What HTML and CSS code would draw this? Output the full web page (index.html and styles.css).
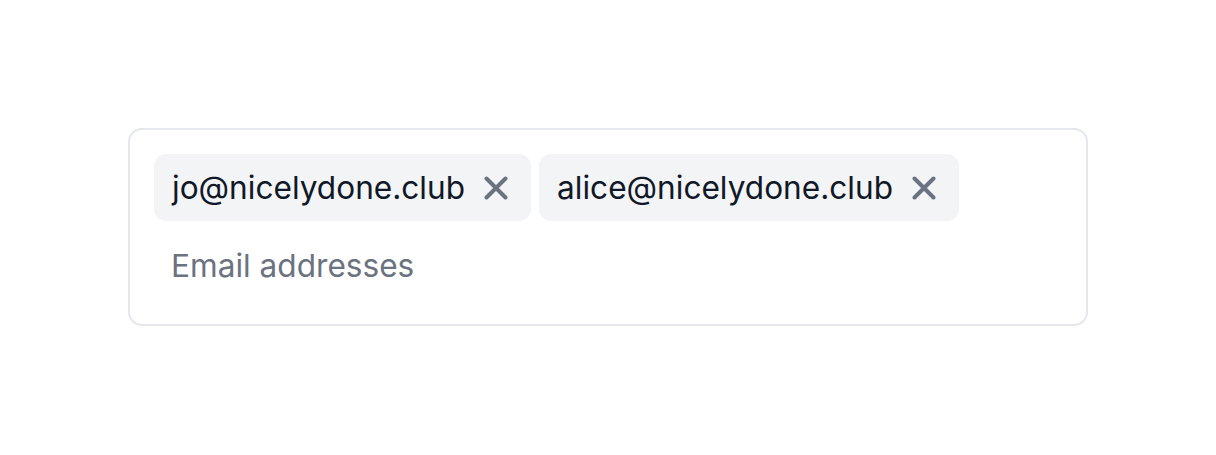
FILE: index.html
```html
<!DOCTYPE html>
<html lang="en">
<head>
  <meta charset="UTF-8" />
  <meta name="viewport" content="width=device-width, initial-scale=1.0" />
  <title>Email tags</title>
  <link rel="stylesheet" href="styles.css">
</head>
<body>
  <div class="tag-field">
    <div class="tags">
      <span class="tag">
        <span class="tag-label">jo@nicelydone.club</span>
        <button class="tag-remove" type="button" aria-label="Remove">
          <svg viewBox="0 0 24 24" width="24" height="24"><path d="M2.5 2.5L21.5 21.5M21.5 2.5L2.5 21.5" /></svg>
        </button>
      </span>
      <span class="tag">
        <span class="tag-label">alice@nicelydone.club</span>
        <button class="tag-remove" type="button" aria-label="Remove">
          <svg viewBox="0 0 24 24" width="24" height="24"><path d="M2.5 2.5L21.5 21.5M21.5 2.5L2.5 21.5" /></svg>
        </button>
      </span>
    </div>
    <input class="tag-input" type="text" placeholder="Email addresses" />
  </div>
</body>
</html>
```

FILE: styles.css
```css
* { box-sizing: border-box; }
body {
  margin: 0;
  background: #fff;
  font-family: 'Inter', 'Liberation Sans', sans-serif;
}
.tag-field {
  width: 960px;
  height: 198px;
  margin: 128px 0 0 128px;
  padding: 24px;
  border: 2px solid #e5e7eb;
  border-radius: 14px;
}
.tags {
  display: flex;
  flex-wrap: wrap;
  gap: 8px;
}
.tag {
  display: flex;
  align-items: center;
  height: 67px;
  padding: 0 23px 0 18px;
  background: #f3f4f6;
  border-radius: 12px;
  color: #111827;
  font-size: 31.6px;
}
.tag-remove {
  display: flex;
  margin-left: 19px;
  padding: 0;
  border: none;
  background: none;
  cursor: pointer;
}
.tag-remove svg {
  stroke: #6b7280;
  stroke-width: 4;
  stroke-linecap: round;
  fill: none;
}
.tag-input {
  display: block;
  width: 100%;
  height: 42px;
  margin-top: 23px;
  padding: 0 17px;
  border: none;
  outline: none;
  font-family: inherit;
  font-size: 31.6px;
  color: #111827;
  background: transparent;
}
.tag-input::placeholder {
  color: #6b7280;
}
```
